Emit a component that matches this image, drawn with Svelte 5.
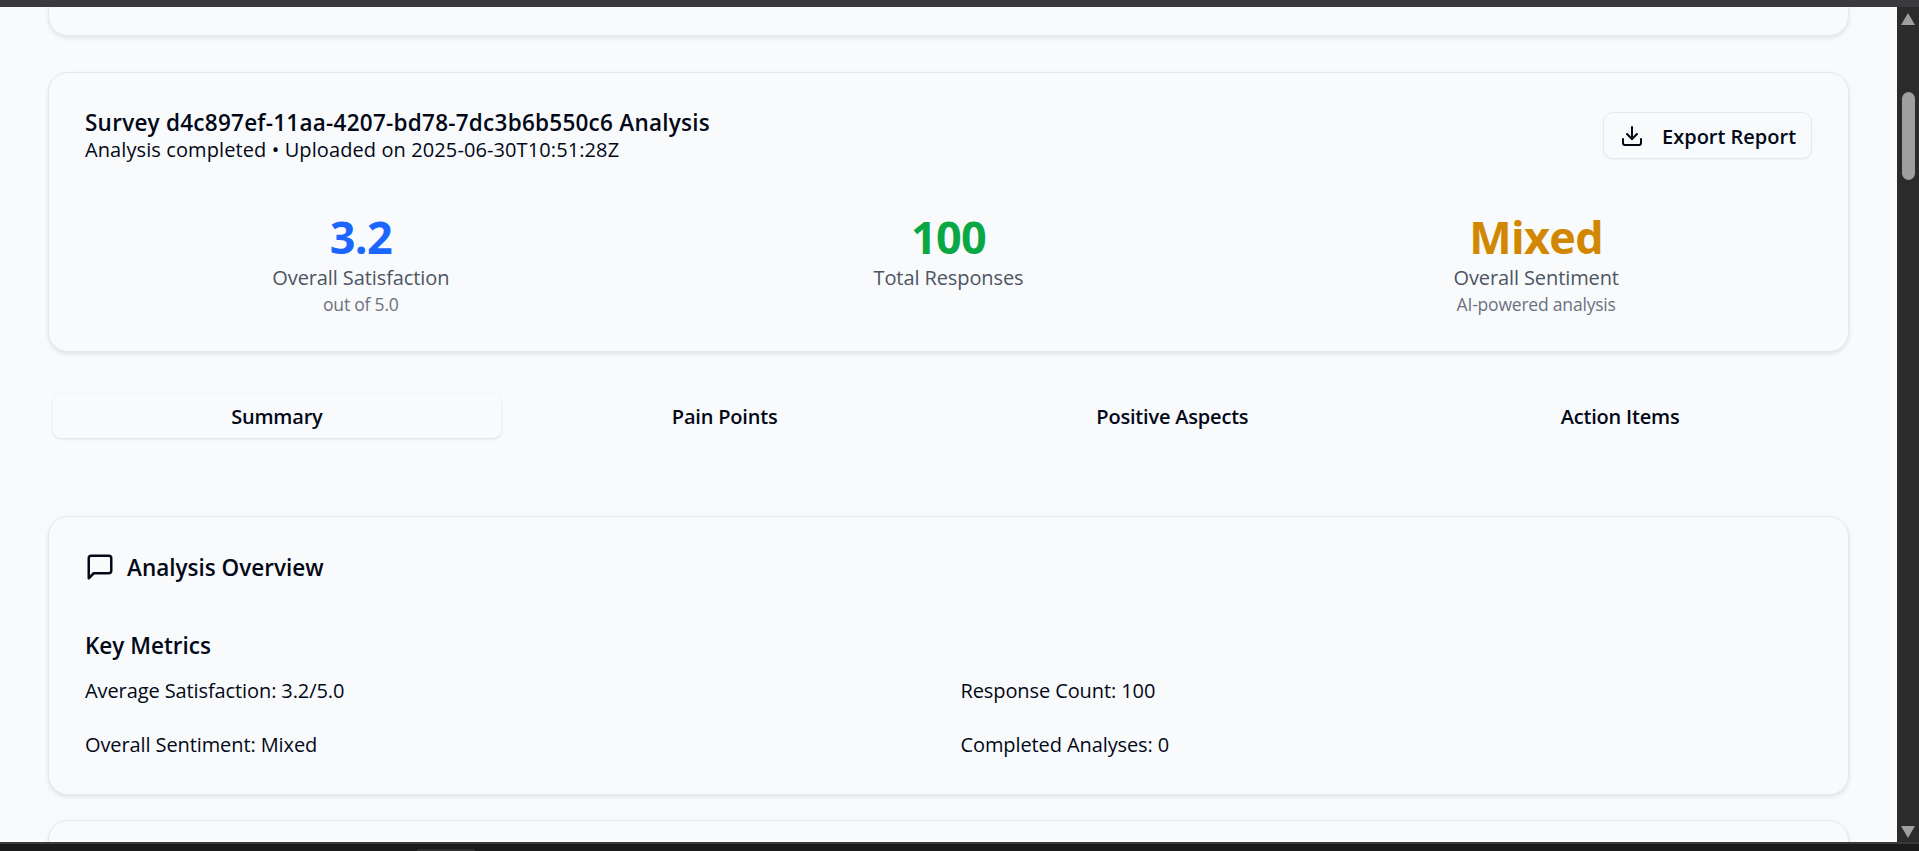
<script>
	const stats = [
		{ value: '3.2', label: 'Overall Satisfaction', note: 'out of 5.0', tone: 'blue' },
		{ value: '100', label: 'Total Responses', note: '', tone: 'green' },
		{ value: 'Mixed', label: 'Overall Sentiment', note: 'AI-powered analysis', tone: 'amber' }
	];
	const tabs = ['Summary', 'Pain Points', 'Positive Aspects', 'Action Items'];
	const metrics = [
		'Average Satisfaction: 3.2/5.0',
		'Response Count: 100',
		'Overall Sentiment: Mixed',
		'Completed Analyses: 0'
	];
</script>

<div class="window">
	<div class="topbar"></div>

	<div class="viewport">
		<main class="page">
			<section class="card stub"></section>

			<section class="card header-card">
				<div class="head">
					<div>
						<h1>Survey d4c897ef-11aa-4207-bd78-7dc3b6b550c6 Analysis</h1>
						<p>Analysis completed • Uploaded on 2025-06-30T10:51:28Z</p>
					</div>
					<button class="export">
						<svg width="24" height="24" viewBox="0 0 24 24" fill="none" stroke="currentColor" stroke-width="2" stroke-linecap="round" stroke-linejoin="round">
							<path d="M21 15v4a2 2 0 0 1-2 2H5a2 2 0 0 1-2-2v-4" />
							<path d="M7 10l5 5 5-5" />
							<path d="M12 15V3" />
						</svg>
						<span>Export Report</span>
					</button>
				</div>
				<div class="stats">
					{#each stats as s}
						<div class="stat">
							<div class="value {s.tone}">{s.value}</div>
							<div class="label">{s.label}</div>
							{#if s.note}<div class="note">{s.note}</div>{/if}
						</div>
					{/each}
				</div>
			</section>

			<nav class="tabs">
				{#each tabs as t, i}
					<button class="tab" class:active={i === 0}>{t}</button>
				{/each}
			</nav>

			<section class="card overview">
				<h2>
					<svg width="30" height="30" viewBox="0 0 24 24" fill="none" stroke="currentColor" stroke-width="2" stroke-linecap="round" stroke-linejoin="round">
						<path d="M21 15a2 2 0 0 1-2 2H7l-4 4V5a2 2 0 0 1 2-2h14a2 2 0 0 1 2 2z" />
					</svg>
					Analysis Overview
				</h2>
				<h3>Key Metrics</h3>
				<div class="metrics">
					{#each metrics as m}
						<div>{m}</div>
					{/each}
				</div>
			</section>

			<section class="card stub-next"></section>
		</main>

		<aside class="scrollbar">
			<span class="arrow up"></span>
			<span class="thumb"></span>
			<span class="arrow down"></span>
		</aside>
	</div>

	<div class="bottombar"><span class="dock-tab"></span></div>
</div>

<style>
	:global(body) {
		background: #f9fafc;
	}

	.window {
		height: 851px;
		display: flex;
		flex-direction: column;
		overflow: hidden;
		font-family: 'Open Sans', 'Noto Sans', sans-serif;
		color: #020817;
	}

	.topbar {
		height: 7px;
		flex: none;
		background: #3a3a3f;
	}

	.viewport {
		flex: 1;
		min-height: 0;
		display: flex;
	}

	.page {
		flex: 1;
		min-width: 0;
		padding: 0 48px;
		background: #f9fafc;
		overflow: hidden;
	}

	.card {
		border: 1px solid #e4e9f1;
		border-radius: 20px;
		background: #f9fafc;
		box-shadow: 0 2px 4px rgba(15, 23, 42, 0.1);
	}

	/* Previous card, scrolled mostly out of view */
	.stub {
		height: 28px;
		border-top: none;
		border-radius: 0 0 20px 20px;
		margin-bottom: 36px;
	}

	.header-card {
		height: 280px;
		box-sizing: border-box;
		padding: 36px;
	}

	.head {
		display: flex;
		justify-content: space-between;
		align-items: flex-start;
	}

	h1 {
		margin: 0;
		font-size: 22.5px;
		line-height: 27px;
		font-weight: 600;
		letter-spacing: 0.25px;
	}

	.head p {
		margin: 0;
		font-size: 20px;
		line-height: 27px;
		letter-spacing: 0.1px;
	}

	.export {
		display: flex;
		align-items: center;
		gap: 18px;
		width: 209px;
		height: 47px;
		margin-top: 3px;
		padding: 0 0 0 16px;
		box-sizing: border-box;
		border: 1px solid #e4e9f1;
		border-radius: 10px;
		background: #f9fafc;
		box-shadow: 0 1px 2px rgba(15, 23, 42, 0.05);
		font: inherit;
		font-size: 20px;
		font-weight: 600;
		color: inherit;
	}

	.export span {
		position: relative;
		top: 1px;
	}

	.stats {
		display: grid;
		grid-template-columns: repeat(3, 1fr);
		gap: 36px;
		margin-top: 49px;
		text-align: center;
	}

	.value {
		font-size: 45px;
		line-height: 50px;
		font-weight: 700;
		letter-spacing: -0.7px;
	}

	.blue {
		color: #1a66ff;
	}

	.green {
		color: #0aa845;
	}

	.amber {
		color: #d18800;
	}

	.label {
		margin-top: 3px;
		font-size: 20px;
		line-height: 26px;
		letter-spacing: -0.1px;
		color: #4b5563;
	}

	.note {
		font-size: 17.5px;
		line-height: 27px;
		letter-spacing: -0.2px;
		color: #6b7280;
	}

	.tabs {
		display: grid;
		grid-template-columns: repeat(4, 1fr);
		padding: 0 5px;
		margin-top: 42px;
	}

	.tab {
		height: 44px;
		border: none;
		border-radius: 8px;
		background: transparent;
		font: inherit;
		font-size: 20px;
		font-weight: 600;
		letter-spacing: -0.2px;
		color: inherit;
	}

	.tab.active {
		box-shadow: 0 1px 3px rgba(15, 23, 42, 0.12);
	}

	.overview {
		height: 279px;
		box-sizing: border-box;
		margin-top: 78px;
		padding: 36px;
	}

	h2 {
		display: flex;
		align-items: center;
		gap: 12px;
		margin: -4px 0 0;
		height: 36px;
		font-size: 22.5px;
		font-weight: 600;
	}

	h3 {
		margin: 46px 0 0;
		font-size: 22.5px;
		line-height: 30px;
		font-weight: 600;
	}

	.metrics {
		display: grid;
		grid-template-columns: 1fr 1fr;
		gap: 24px;
		margin-top: 15px;
		font-size: 20px;
		line-height: 30px;
		letter-spacing: -0.1px;
	}

	.stub-next {
		height: 60px;
		margin-top: 25px;
	}

	.scrollbar {
		flex: none;
		width: 22px;
		position: relative;
		background: #2b2b2b;
	}

	.arrow {
		position: absolute;
		left: 4px;
		width: 0;
		height: 0;
		border-left: 7px solid transparent;
		border-right: 7px solid transparent;
	}

	.arrow.up {
		top: 6px;
		border-bottom: 12px solid #9f9f9f;
	}

	.arrow.down {
		bottom: 4px;
		border-top: 12px solid #9f9f9f;
	}

	.thumb {
		position: absolute;
		top: 85px;
		left: 5px;
		width: 13px;
		height: 88px;
		border-radius: 7px;
		background: #9f9f9f;
	}

	.bottombar {
		height: 9px;
		flex: none;
		box-sizing: border-box;
		border-top: 2px solid #3a3a3a;
		background: #1b1b1b;
		position: relative;
	}

	.dock-tab {
		position: absolute;
		left: 417px;
		bottom: 0;
		width: 58px;
		height: 2px;
		border-radius: 3px 3px 0 0;
		background: #2e2e2e;
	}
</style>
